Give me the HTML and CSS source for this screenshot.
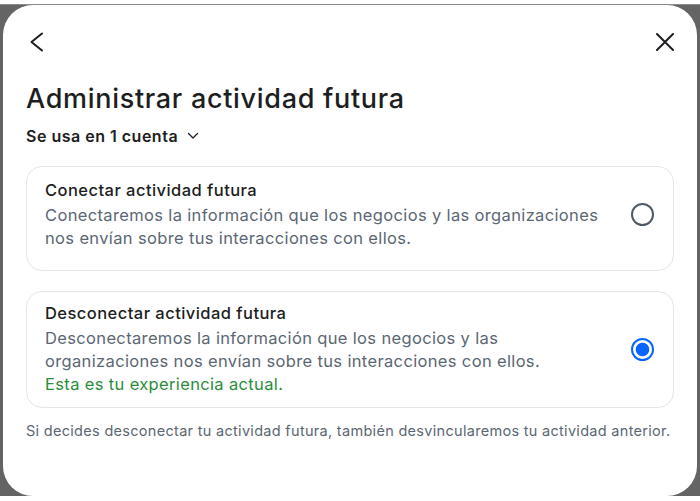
FILE: index.html
```html
<!DOCTYPE html>
<html lang="es">
<head>
<meta charset="utf-8">
<title>Administrar actividad futura</title>
<link rel="stylesheet" href="styles.css">
</head>
<body>
<div class="backdrop">
  <div class="modal">
    <div class="topbar">
      <button class="icon-btn back" aria-label="Atrás">
        <svg width="16" height="22" viewBox="0 0 16 22"><path d="M13 2.5 L2.5 11 L13 19.5" fill="none" stroke="#1c1e21" stroke-width="2" stroke-linecap="round" stroke-linejoin="round"/></svg>
      </button>
      <button class="icon-btn" aria-label="Cerrar">
        <svg width="18" height="18" viewBox="0 0 18 18"><path d="M1 1 L17 17 M17 1 L1 17" fill="none" stroke="#1c1e21" stroke-width="2" stroke-linecap="round"/></svg>
      </button>
    </div>
    <h1 class="title">Administrar actividad futura</h1>
    <div class="accounts">Se usa en 1 cuenta
      <svg width="12" height="12" viewBox="0 0 12 12"><path d="M1.5 3.5 L6 8 L10.5 3.5" fill="none" stroke="#1c1e21" stroke-width="1.3" stroke-linecap="round" stroke-linejoin="round"/></svg>
    </div>
    <div class="option option-first">
      <div class="option-text">
        <div class="option-title">Conectar actividad futura</div>
        <div class="option-desc">Conectaremos la información que los negocios y las organizaciones nos envían sobre tus interacciones con ellos.</div>
      </div>
      <span class="radio"></span>
    </div>
    <div class="option option-second">
      <div class="option-text">
        <div class="option-title">Desconectar actividad futura</div>
        <div class="option-desc">Desconectaremos la información que los negocios y las organizaciones nos envían sobre tus interacciones con ellos.</div>
        <div class="option-note">Esta es tu experiencia actual.</div>
      </div>
      <span class="radio checked"></span>
    </div>
    <p class="footnote">Si decides desconectar tu actividad futura, también desvincularemos tu actividad anterior.</p>
  </div>
</div>
</body>
</html>
```
FILE: styles.css
```css
* { box-sizing: border-box; }
html, body { margin: 0; padding: 0; background: #ffffff; }
body { font-family: Inter, "Noto Sans", sans-serif; color: #1c1e21; }
.backdrop {
  margin-top: 4px;
  height: 492px;
  background: #646464;
  border-top: 1px solid #8a8a8a;
  padding: 0 3px;
}
.modal {
  height: 100%;
  background: #fff;
  border-radius: 30px;
  padding: 26px 23px 0 23px;
}
.topbar { display: flex; justify-content: space-between; align-items: center; height: 22px; }
.icon-btn { background: none; border: 0; padding: 0; display: flex; }
.icon-btn.back { margin-left: 3px; }
.title { font-size: 27px; font-weight: 500; margin: 29px 0 0; line-height: 34px; letter-spacing: 0.7px; }
.accounts { font-size: 16px; font-weight: 600; line-height: 20px; margin-top: 10px; display: flex; align-items: center; gap: 9px; letter-spacing: 0.5px; }
.option {
  display: flex; align-items: center; justify-content: space-between;
  border: 1px solid #e3e6ea; border-radius: 16px;
  padding: 12px 18px 20px 18px;
}
.option-first { margin-top: 20px; }
.option-second { margin-top: 20px; padding-top: 10px; padding-bottom: 11px; }
.option-text { width: 562px; }
.option-title { font-size: 16.5px; font-weight: 500; line-height: 22px; margin-bottom: 3px; letter-spacing: 0.45px; }
.option-desc { font-size: 16.5px; color: #5b6773; line-height: 23px; letter-spacing: 0.35px; }
.option-note { font-size: 16.5px; color: #2b8d3b; line-height: 23px; letter-spacing: 0.35px; }
.radio { width: 23px; height: 23px; border-radius: 50%; border: 2px solid #4f5a65; margin-right: 1px; flex: none; }
.radio.checked { border-color: #0866ff; background: radial-gradient(circle, #0866ff 0 6.3px, #fff 7.2px); }
.footnote { font-size: 14.5px; color: #5b6773; margin: 14px 0 0; line-height: 18px; letter-spacing: 0.3px; }
```
